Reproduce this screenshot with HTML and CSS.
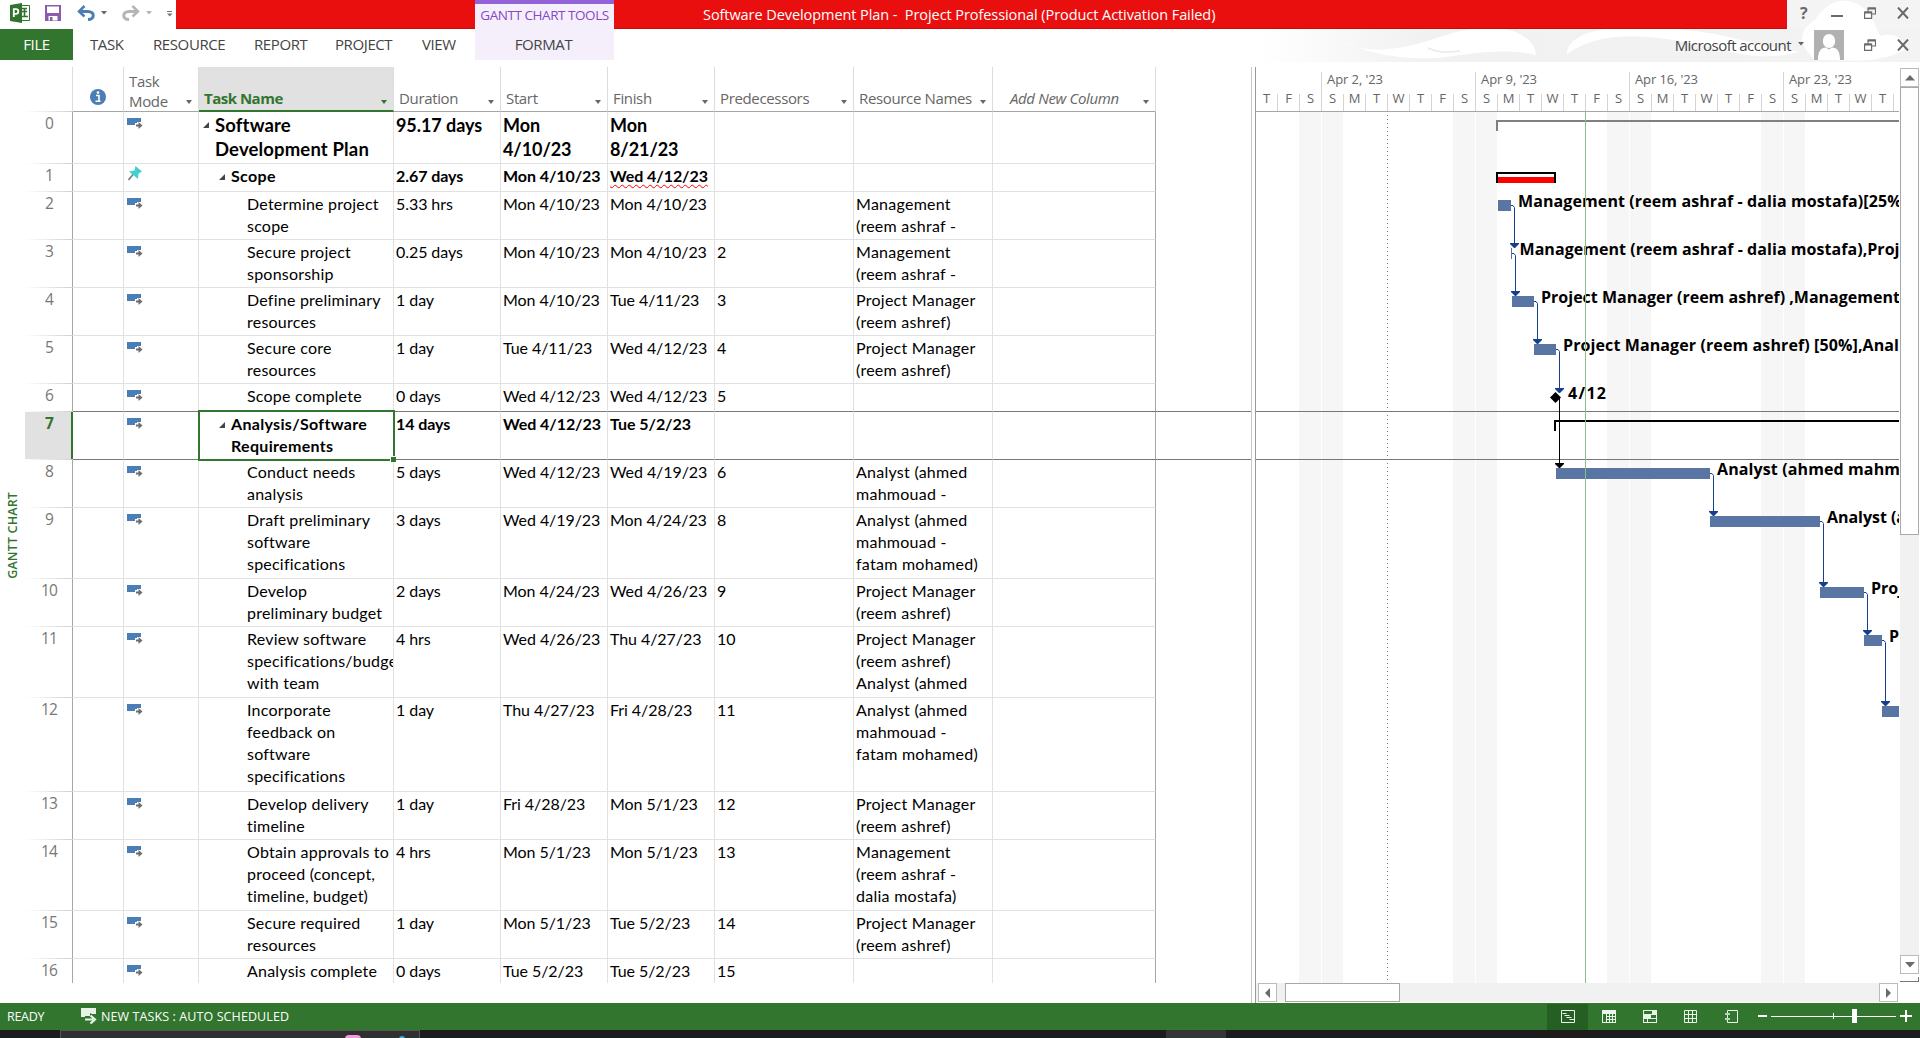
FILE: index.html
```html
<!DOCTYPE html>
<html lang="en">
<head>
<meta charset="utf-8">
<title>Software Development Plan - Project Professional</title>
<link rel="stylesheet" href="styles.css">
</head>
<body>
<svg class="defs" width="0" height="0">
  <symbol id="auto" viewBox="0 0 16 11"><path fill="#4a7eb5" d="M0 0h14v4h-4v1H8v2H0z"/><path d="M9 7.5h4" stroke="#6d6d6d" stroke-width="2"/><path d="M11.5 4l4 3.500-4 3.500" fill="#6d6d6d"/></symbol>
  <symbol id="pin" viewBox="0 0 14 15"><path d="M.5 14L5 8.500" stroke="#7a7a7a" stroke-width="1.600"/><path fill="#41d0cf" d="M7.500 0L14 5.500 10.500 7.500 10 13 1 5.500 6.500 4.500z"/></symbol>
  <symbol id="restore" viewBox="0 0 12 12"><path d="M4 4.500V1h7.500v6H8" fill="none" stroke="#6a6a6a" stroke-width="1.200"/><path d="M4 1.500h7.500M.5 5.500h7" stroke="#6a6a6a" stroke-width="2"/><path d="M.6 5h7v6.400h-7z" fill="none" stroke="#6a6a6a" stroke-width="1.200"/></symbol>
  <symbol id="close" viewBox="0 0 12 12"><path d="M1 .5l10 11M11 .5L1 11.500" stroke="#6a6a6a" stroke-width="2"/></symbol>
</svg>

<header class="top">
  <svg class="art" width="660" height="62" viewBox="1260 0 660 62">
    <defs><linearGradient id="fade"><stop offset="0" stop-color="#f1f1f1" stop-opacity="0"/><stop offset=".25" stop-color="#f1f1f1"/><stop offset="1" stop-color="#f3f3f3"/></linearGradient></defs>
    <path fill="url(#fade)" d="M1260 29h660v33h-660z"/><path fill="#f4f4f4" d="M1786 0h134v29h-134z"/>
    <path fill="#fff" d="M1325 31c25 18 40 21 72 17 40-5 65-26 109-19 20 5 29 15 30 26-30-7-62-2-90 2-35 5-90-3-121-26z"/>
    <path fill="#fff" d="M1567 54c0-24 52-33 120-24 50 6 60 14 113 22-35 8-55 4-95-6-65-14-106-14-138 8z"/>
    <path fill="#fff" d="M1815 20c15-24 38-25 55-6l10 22c15-4 25 2 24 14-20 12-50 12-90 9-15-14-17-28 1-39z"/>
    <path d="M1428 48c8 4 15 5 32 3" fill="none" stroke="#e9e9e9" stroke-width="1.500"/>
  </svg>
  <div class="titlebar">
    <svg class="qat" width="176" height="29" viewBox="0 0 176 29">
      <path d="M20 5.500h9.500v15H20z" fill="#fff" stroke="#2f732e"/><path d="M22 8.500h5M21 11.500h6M22 16.500h6M24.500 9v8" stroke="#2f732e" stroke-width="1.600"/>
      <path fill="#2f732e" d="M10 5l12-2v20l-12-2z"/><path d="M13.800 17V9.200h2.200a2 2 0 0 1 0 4.600h-2" fill="none" stroke="#fff" stroke-width="1.800"/>
      <path fill="#8c5aae" d="M45 5h16v16H45z"/><path fill="#fff" d="M47 6.500h12v6.500H47zM48.500 16h9v4.500h-9z"/><path fill="#8c5aae" d="M50 17h2.500v4H50z"/>
      <path d="M79 11.500h9c7 0 7 8 0 8" fill="none" stroke="#4a7eb5" stroke-width="3"/><path d="M84.500 6L79 11.500l5.500 5" fill="none" stroke="#4a7eb5" stroke-width="2.500"/>
      <path fill="#666" d="M101 11h6l-3 3.500z"/>
      <path d="M138 11.500h-9c-7 0-7 8 0 8" fill="none" stroke="#b5b5b5" stroke-width="3"/><path d="M132.500 6l5.500 5.500-5.500 5" fill="none" stroke="#b5b5b5" stroke-width="2.500"/>
      <path fill="#b5b5b5" d="M146 11h6l-3 3.500z"/><path fill="#777" d="M167 11h5v1h-5zM167 13.500h5.500l-2.750 3z"/>
    </svg>
    <div class="red red-left"></div>
    <div class="tooltab"><span class="t-tools">GANTT CHART TOOLS</span></div>
    <div class="red red-right"><span class="t-title">Software Development Plan -&nbsp; Project Professional (Product Activation Failed)</span></div>
    <div class="winbtns">
      <span class="help">?</span>
      <svg width="12" height="12" viewBox="0 0 12 12"><path d="M0 9h12" stroke="#6a6a6a" stroke-width="2"/></svg>
      <svg width="12" height="12"><use href="#restore"/></svg>
      <svg width="12" height="12"><use href="#close"/></svg>
    </div>
  </div>
  <nav class="tabs">
    <span class="file">FILE</span><span class="tab task">TASK</span><span class="tab resource">RESOURCE</span><span class="tab report">REPORT</span><span class="tab project">PROJECT</span><span class="tab view">VIEW</span><span class="format">FORMAT</span>
    <div class="account">
      <span class="acct-name">Microsoft account</span>
      <svg class="acct-caret" width="6" height="4" viewBox="0 0 6 4"><path fill="#666" d="M0 0h6l-3 3.500z"/></svg>
      <svg class="avatar" width="30" height="30" viewBox="0 0 30 30"><path fill="#b1b1b1" d="M0 0h30v30H0z"/><ellipse cx="15" cy="11" rx="6.200" ry="7" fill="#fff"/><path fill="#fff" d="M4 30c0-9 3-12.500 8-12.500l3 2 3-2c5 0 8 3.500 8 12.500z"/></svg>
      <svg class="r2" width="12" height="12"><use href="#restore"/></svg>
      <svg width="12" height="12"><use href="#close"/></svg>
    </div>
  </nav>
</header>

<main class="work">
  <aside class="strip"><span>GANTT CHART</span></aside>
  <section class="sheet">
    <div class="row head">
      <div class="num"></div>
      <div class="c"><svg class="info" width="16" height="16" viewBox="0 0 16 16"><circle cx="8" cy="8" r="8" fill="#4a7eb5"/><path d="M6 6.500h3V12M5.500 12.300h5" fill="none" stroke="#fff" stroke-width="1.600"/><circle cx="8" cy="3.600" r="1.300" fill="#fff"/></svg></div>
      <div class="c two"><span>Task
Mode</span><i></i></div>
      <div class="c sel"><span class="h-name">Task Name</span><i></i></div>
      <div class="c"><span>Duration</span><i></i></div>
      <div class="c"><span>Start</span><i></i></div>
      <div class="c"><span>Finish</span><i></i></div>
      <div class="c"><span>Predecessors</span><i></i></div>
      <div class="c"><span>Resource Names</span><i></i></div>
      <div class="c add"><span>Add New Column</span><i></i></div>
    </div>
    <div class="row r0"><div class="num">0</div><div class="c"></div><div class="c m"><svg><use href="#auto"/></svg></div><div class="c n l0"><b></b>Software
Development Plan</div><div class="c">95.17 days</div><div class="c">Mon
4/10/23</div><div class="c">Mon
8/21/23</div><div class="c"></div><div class="c"></div><div class="c"></div></div>
    <div class="row h1 bold"><div class="num">1</div><div class="c"></div><div class="c m"><svg class="pin"><use href="#pin"/></svg></div><div class="c n l1"><b></b>Scope</div><div class="c">2.67 days</div><div class="c">Mon 4/10/23</div><div class="c"><u>Wed 4/12/23</u></div><div class="c"></div><div class="c"></div><div class="c"></div></div>
    <div class="row h2"><div class="num">2</div><div class="c"></div><div class="c m"><svg><use href="#auto"/></svg></div><div class="c n">Determine project
scope</div><div class="c">5.33 hrs</div><div class="c">Mon 4/10/23</div><div class="c">Mon 4/10/23</div><div class="c"></div><div class="c res">Management
(reem ashraf -</div><div class="c"></div></div>
    <div class="row h2"><div class="num">3</div><div class="c"></div><div class="c m"><svg><use href="#auto"/></svg></div><div class="c n">Secure project
sponsorship</div><div class="c">0.25 days</div><div class="c">Mon 4/10/23</div><div class="c">Mon 4/10/23</div><div class="c">2</div><div class="c res">Management
(reem ashraf -</div><div class="c"></div></div>
    <div class="row h2"><div class="num">4</div><div class="c"></div><div class="c m"><svg><use href="#auto"/></svg></div><div class="c n">Define preliminary
resources</div><div class="c">1 day</div><div class="c">Mon 4/10/23</div><div class="c">Tue 4/11/23</div><div class="c">3</div><div class="c res">Project Manager
(reem ashref)</div><div class="c"></div></div>
    <div class="row h2"><div class="num">5</div><div class="c"></div><div class="c m"><svg><use href="#auto"/></svg></div><div class="c n">Secure core
resources</div><div class="c">1 day</div><div class="c">Tue 4/11/23</div><div class="c">Wed 4/12/23</div><div class="c">4</div><div class="c res">Project Manager
(reem ashref)</div><div class="c"></div></div>
    <div class="row h1 edge"><div class="num">6</div><div class="c"></div><div class="c m"><svg><use href="#auto"/></svg></div><div class="c n">Scope complete</div><div class="c">0 days</div><div class="c">Wed 4/12/23</div><div class="c">Wed 4/12/23</div><div class="c">5</div><div class="c"></div><div class="c"></div><div class="fill"></div></div>
    <div class="row h2 edge bold current"><div class="num">7</div><div class="c"></div><div class="c m"><svg><use href="#auto"/></svg></div><div class="c n l1 picked"><b></b>Analysis/Software
Requirements</div><div class="c">14 days</div><div class="c">Wed 4/12/23</div><div class="c">Tue 5/2/23</div><div class="c"></div><div class="c"></div><div class="c"></div><div class="fill"></div></div>
    <div class="row h2"><div class="num">8</div><div class="c"></div><div class="c m"><svg><use href="#auto"/></svg></div><div class="c n">Conduct needs
analysis</div><div class="c">5 days</div><div class="c">Wed 4/12/23</div><div class="c">Wed 4/19/23</div><div class="c">6</div><div class="c res">Analyst (ahmed
mahmouad -</div><div class="c"></div></div>
    <div class="row h3"><div class="num">9</div><div class="c"></div><div class="c m"><svg><use href="#auto"/></svg></div><div class="c n">Draft preliminary
software
specifications</div><div class="c">3 days</div><div class="c">Wed 4/19/23</div><div class="c">Mon 4/24/23</div><div class="c">8</div><div class="c res">Analyst (ahmed
mahmouad -
fatam mohamed)</div><div class="c"></div></div>
    <div class="row h2"><div class="num">10</div><div class="c"></div><div class="c m"><svg><use href="#auto"/></svg></div><div class="c n">Develop
preliminary budget</div><div class="c">2 days</div><div class="c">Mon 4/24/23</div><div class="c">Wed 4/26/23</div><div class="c">9</div><div class="c res">Project Manager
(reem ashref)</div><div class="c"></div></div>
    <div class="row h3"><div class="num">11</div><div class="c"></div><div class="c m"><svg><use href="#auto"/></svg></div><div class="c n">Review software
specifications/budget
with team</div><div class="c">4 hrs</div><div class="c">Wed 4/26/23</div><div class="c">Thu 4/27/23</div><div class="c">10</div><div class="c res">Project Manager
(reem ashref)
Analyst (ahmed</div><div class="c"></div></div>
    <div class="row h4"><div class="num">12</div><div class="c"></div><div class="c m"><svg><use href="#auto"/></svg></div><div class="c n">Incorporate
feedback on
software
specifications</div><div class="c">1 day</div><div class="c">Thu 4/27/23</div><div class="c">Fri 4/28/23</div><div class="c">11</div><div class="c res">Analyst (ahmed
mahmouad -
fatam mohamed)</div><div class="c"></div></div>
    <div class="row h2"><div class="num">13</div><div class="c"></div><div class="c m"><svg><use href="#auto"/></svg></div><div class="c n">Develop delivery
timeline</div><div class="c">1 day</div><div class="c">Fri 4/28/23</div><div class="c">Mon 5/1/23</div><div class="c">12</div><div class="c res">Project Manager
(reem ashref)</div><div class="c"></div></div>
    <div class="row h3"><div class="num">14</div><div class="c"></div><div class="c m"><svg><use href="#auto"/></svg></div><div class="c n">Obtain approvals to
proceed (concept,
timeline, budget)</div><div class="c">4 hrs</div><div class="c">Mon 5/1/23</div><div class="c">Mon 5/1/23</div><div class="c">13</div><div class="c res">Management
(reem ashraf -
dalia mostafa)</div><div class="c"></div></div>
    <div class="row h2"><div class="num">15</div><div class="c"></div><div class="c m"><svg><use href="#auto"/></svg></div><div class="c n">Secure required
resources</div><div class="c">1 day</div><div class="c">Mon 5/1/23</div><div class="c">Tue 5/2/23</div><div class="c">14</div><div class="c res">Project Manager
(reem ashref)</div><div class="c"></div></div>
    <div class="row last"><div class="num">16</div><div class="c"></div><div class="c m"><svg><use href="#auto"/></svg></div><div class="c n">Analysis complete</div><div class="c">0 days</div><div class="c">Tue 5/2/23</div><div class="c">Tue 5/2/23</div><div class="c">15</div><div class="c"></div><div class="c"></div></div>
  </section>
  <div class="split"></div>
  <section class="chartpane">
    <svg class="chart" width="643" height="916" viewBox="1256 67 643 916">
      <defs>
        <pattern id="week" x="1299" y="112" width="154" height="900" patternUnits="userSpaceOnUse"><path fill="#f6f6f6" d="M0 0h22v900H0zM23 0h21v900H23z"/></pattern>
        <pattern id="day" x="1255" y="94" width="22" height="18" patternUnits="userSpaceOnUse"><path fill="#d4d4d4" d="M0 0h1v18H0z"/></pattern>
        <path id="tip" d="M-4.500-5h9v1L.5 0h-1l-4-4z"/>
      </defs>
      <path fill="url(#week)" d="M1256 112h643v871h-643z"/>
      <path fill="url(#day)" d="M1257 94h642v17h-642z"/>
      <path d="M1321.500 72v39M1475.500 72v39M1629.500 72v39M1783.500 72v39" stroke="#d4d4d4"/>
      <path d="M1256 111.500h643" stroke="#a6a6a6"/>
      <g class="scale">
        <text x="1327" y="84" textLength="56">Apr 2, '23</text><text x="1481" y="84" textLength="56">Apr 9, '23</text><text x="1635" y="84" textLength="63">Apr 16, '23</text><text x="1789" y="84" textLength="63">Apr 23, '23</text>
      </g>
      <g class="days">
        <text x="1266.500" y="103">T</text><text x="1288.500" y="103">F</text><text x="1310.500" y="103">S</text><text x="1332.500" y="103">S</text><text x="1354.500" y="103">M</text><text x="1376.500" y="103">T</text><text x="1398.500" y="103">W</text><text x="1420.500" y="103">T</text><text x="1442.500" y="103">F</text><text x="1464.500" y="103">S</text><text x="1486.500" y="103">S</text><text x="1508.500" y="103">M</text><text x="1530.500" y="103">T</text><text x="1552.500" y="103">W</text><text x="1574.500" y="103">T</text><text x="1596.500" y="103">F</text><text x="1618.500" y="103">S</text><text x="1640.500" y="103">S</text><text x="1662.500" y="103">M</text><text x="1684.500" y="103">T</text><text x="1706.500" y="103">W</text><text x="1728.500" y="103">T</text><text x="1750.500" y="103">F</text><text x="1772.500" y="103">S</text><text x="1794.500" y="103">S</text><text x="1816.500" y="103">M</text><text x="1838.500" y="103">T</text><text x="1860.500" y="103">W</text><text x="1882.500" y="103">T</text>
      </g>
      <path d="M1387.500 115v868" stroke="#777" stroke-dasharray="1 3"/>
      <path fill="#808080" d="M1496 120h403v2h-401v9h-2z"/>
      <path fill="#000" d="M1496 172h60v11h-2v-9h-56v9h-2z"/><path fill="#f00" d="M1498 177h56v6h-56z"/>
      <path d="M1256 411.500h643M1256 459.500h643" stroke="#777"/>
      <path fill="#000" d="M1554 420h345v2h-343v9h-2z"/>
      <path fill="#5975a4" d="M1498 200h13v11h-13zM1512 296h22v11h-22zM1534 344h22v11h-22zM1556 468h154v11h-154zM1710 516h110v11h-110zM1820 587h44v11h-44zM1864 635h18v11h-18zM1882 706h17v11h-17zM1511 248h1v11h-1z"/>
      <g fill="none" stroke="#16408c">
        <path d="M1511 205.500h2l1.500 2V245M1512 253.500h2l1.500 2V293M1534 301.500h2l1.500 2V341M1556 349.500h2l1.500 2V390M1710 473.500h2l1.500 2V513M1820 521.500h2l1.500 2V584M1864 592.500h2l1.500 2V632M1882 640.500h2l1.500 2V703"/>
      </g>
      <g fill="#16408c"><use href="#tip" x="1514.500" y="248"/><use href="#tip" x="1515.500" y="296"/><use href="#tip" x="1537.500" y="344"/><use href="#tip" x="1559.500" y="393"/><use href="#tip" x="1713.500" y="516"/><use href="#tip" x="1823.500" y="587"/><use href="#tip" x="1867.500" y="635"/><use href="#tip" x="1885.500" y="706"/></g>
      <path d="M1559.500 397V465" stroke="#000"/><use href="#tip" x="1559.500" y="468"/><path d="M1555.500 392l5.500 5.500-5.500 5.500-5.500-5.500z"/>
      <g class="labels">
        <text x="1518" y="207" textLength="389">Management (reem ashraf - dalia mostafa)[25%]</text>
        <text x="1519.500" y="255" textLength="380">Management (reem ashraf - dalia mostafa),Proj</text>
        <text x="1541" y="303" textLength="359">Project Manager (reem ashref) ,Management</text>
        <text x="1563" y="351" textLength="336">Project Manager (reem ashref) [50%],Anal</text>
        <text x="1568" y="399" textLength="38">4/12</text>
        <text x="1717" y="475" textLength="193">Analyst (ahmed mahmo</text>
        <text x="1827" y="523" textLength="79">Analyst (a</text>
        <text x="1871" y="594">Project</text>
        <text x="1889" y="642">Project</text>
      </g>
      <path d="M1585.500 112v871" stroke="#8dbd8b"/>
    </svg>
    <div class="hscroll"><span class="btn"><svg width="6" height="10" viewBox="0 0 6 10"><path fill="#6a6a6a" d="M5 0v10L0 5z"/></svg></span><span class="hthumb"></span><span class="btn end"><svg width="6" height="10" viewBox="0 0 6 10"><path fill="#6a6a6a" d="M0 0v10l5-5z"/></svg></span></div>
  </section>
  <div class="vscroll"><span class="btn"><svg width="10" height="6" viewBox="0 0 10 6"><path fill="#6a6a6a" d="M0 5.500h10L5 0z"/></svg></span><span class="vthumb"></span><span class="vtrack"></span><span class="btn"><svg width="10" height="6" viewBox="0 0 10 6"><path fill="#6a6a6a" d="M0 0h10L5 5.500z"/></svg></span><span class="grip"></span></div>
</main>

<footer class="status">
  <span class="t-ready">READY</span>
  <svg class="newicon" width="16" height="16" viewBox="0 0 16 16"><path fill="#e8f1e8" d="M0 0h15v6h-4l-2-1v3H4v1H0z"/><path d="M4 11.500h8M9.500 7.500l4.500 4-4.500 4" fill="none" stroke="#e8f1e8" stroke-width="2.200"/></svg>
  <span class="t-new">NEW TASKS : AUTO SCHEDULED</span>
  <div class="views">
    <span class="v on"><svg width="14" height="13" viewBox="0 0 14 13"><path d="M.5.500h13v12H.5zM1.500 3.500h4M3.500 5.500h5M5.500 7.500h5M8.500 9.500h5" fill="none" stroke="#e8f5e8"/></svg></span>
    <span class="v"><svg width="14" height="13" viewBox="0 0 14 13"><path fill="#e8f5e8" d="M0 0h14v13H0z"/><path fill="#31752f" d="M1 4h3v8H1zM5 4h2v2H5zM8 4h2v2H8zM11 4h2v2h-2zM5 7h2v2H5zM8 7h2v2H8zM11 7h2v2h-2zM5 10h2v2H5zM8 10h2v2H8zM11 10h2v2h-2z"/></svg></span>
    <span class="v"><svg width="14" height="13" viewBox="0 0 14 13"><path fill="#e8f5e8" d="M0 0h14v13H0z"/><path fill="#31752f" d="M1 1h8v3H1zM8 5h5v3H8zM1 9h3v3H1zM5 9h8v3H5z"/></svg></span>
    <span class="v"><svg width="13" height="13" viewBox="0 0 13 13"><path d="M.5.500h12v12H.5zM4.500 0v13M8.500 0v13M0 4.500h13M0 8.500h13" fill="none" stroke="#e8f5e8"/></svg></span>
    <span class="v"><svg width="13" height="13" viewBox="0 0 13 13"><path d="M2.500.500h10v12h-10z" fill="none" stroke="#e8f5e8"/><path fill="#b9d4b9" d="M0 3h5v2H0zM0 8h5v2H0z"/></svg></span>
  </div>
  <svg class="zoom" width="160" height="27" viewBox="1755 1003 160 27"><path fill="#fff" d="M1758 1015h9v2h-9zM1771 1016h125v1h-125zM1833 1013h1v6h-1zM1852 1009h5v14h-5zM1900 1015h12v2h-12zM1905 1010h2v12h-2z"/></svg>
</footer>
<div class="taskbar"><div class="search"><i class="pink"></i><i class="blue"></i></div><div class="app"></div></div>
</body>
</html>
```
FILE: styles.css
```css
*, *::before, *::after { box-sizing: border-box; }
body { margin: 0; width: 1920px; height: 1038px; overflow: hidden; background: #fff; font-family: "Open Sans", "Noto Sans", sans-serif; }
svg { display: block; }
.defs { position: absolute; }
.top { position: relative; height: 67px; }
.art { position: absolute; right: 0; top: 0; }
.titlebar { position: relative; display: flex; height: 29px; }
.red { background: #e90f0f; border-bottom: 1px solid #c80a0a; }
.red-left { width: 299px; }
.red-right { width: 1173px; padding-left: 89px; color: #fff; font-size: 14.5px; line-height: 29px; white-space: nowrap; }
.tooltab { width: 139px; border-top: 4px solid #9362d6; background: #f5effb; color: #8648c9; font-size: 13.5px; line-height: 23px; text-align: center; white-space: nowrap; }
.t-tools { letter-spacing: -.45px; }
.t-title { letter-spacing: -.07px; }
.winbtns { display: flex; align-items: center; padding: 0 0 3px 13px; gap: 21px; }
.help { width: 10px; color: #6a6a6a; font-size: 16px; font-weight: 700; line-height: 20px; }
.tabs { position: relative; display: flex; height: 31px; color: #444; font-size: 15px; line-height: 30px; white-space: nowrap; letter-spacing: -.4px; }
.file { width: 73px; background: #31752f; color: #fff; text-align: center; }
.tab { padding-left: 17px; }
.task { width: 63px; }
.resource { width: 101px; }
.report { width: 81px; }
.project { width: 87px; }
.view { width: 70px; }
.format { width: 139px; background: #f5effb; text-align: center; padding-right: 2px; }
.account { display: flex; align-items: center; margin-left: auto; padding-right: 11px; }
.acct-name { letter-spacing: -.54px; }
.acct-caret { margin: 0 10px 2px 7px; }
.r2 { margin: 0 21px 0 20px; }

.work { display: flex; height: 936px; }
.strip { width: 25px; display: flex; align-items: flex-end; padding: 0 0 424px 4px; }
.strip span { writing-mode: vertical-rl; transform: rotate(180deg); font-size: 12.5px; font-weight: 600; line-height: 17px; color: #31752f; letter-spacing: .15px; }
.sheet { width: 1226px; font: 16px/22px Lato, Carlito, sans-serif; color: #000; }
.row { display: grid; grid-template-columns: 48px 51px 75px 195px 107px 107px 107px 139px 139px 163px 95px; white-space: pre; }
.h1 { height: 28px; }
.h2 { height: 48px; }
.h3 { height: 71px; }
.h4 { height: 94px; }
.last { height: 24px; }
.c { border-right: 1px solid #e1e1e1; border-bottom: 1px solid #e1e1e1; padding: 1px 0 0 2px; overflow: hidden; letter-spacing: -.07px; }
.num { font-family: "Open Sans", sans-serif; font-size: 15.5px; line-height: 22px; color: #777; text-align: center; border-right: 1px solid #a6a6a6; border-bottom: 1px solid; border-image: linear-gradient(90deg, #fff, #d0d0d0) 1; box-shadow: inset -1px 0 #a6a6a6; letter-spacing: -.8px; }
.row .num { border-right: 0; }
.c:nth-child(10) { border-right-color: #a6a6a6; }
.n { padding-left: 48px; letter-spacing: .22px; }
.res { letter-spacing: .26px; }
.m { padding: 6px 0 0 3px; }
.m svg { width: 16px; height: 11px; }
.m .pin { width: 14px; height: 15px; margin: -4px 0 0 1px; }
.bold { font-weight: 700; }
.bold .n { letter-spacing: .32px; }
.l0, .l1 { display: block; position: relative; }
.l1 { padding-left: 32px; }
.l0 { padding-left: 16px; }
.n b { position: absolute; left: 20px; top: 10px; border-left: 6px solid transparent; border-bottom: 6px solid #444; }
.n.l0 b { left: 4px; }
.r0 { height: 52px; font-size: 18px; font-weight: 700; line-height: 24px; }
.r0 .n { font-size: 18.5px; letter-spacing: .15px; }
.r0 .num, .bold .num { font-weight: 400; }
.last > * { border-bottom: 0; }
.row u { text-decoration: underline wavy #f00 1px; text-underline-offset: 2px; }
.edge > .c, .fill { border-bottom: 1px solid #777; }
.row.current > .num { background: #e1e1e1; color: #31752f; font-weight: 700; box-shadow: inset -2px 0 #31752f; }
.picked { overflow: visible; z-index: 1; }
.picked::before { content: ""; position: absolute; left: -1px; top: -2px; width: 197px; height: 51px; border: 2px solid #31752f; }
.picked::after { content: ""; position: absolute; right: -3px; bottom: -3px; width: 6px; height: 6px; background: #31752f; border: 1px solid #fff; border-width: 1px 0 0 1px; }
.head { height: 45px; font: 15px/20px "Open Sans", sans-serif; color: #666; }
.head .c { display: flex; align-items: flex-end; padding: 0 6px 1px 5px; letter-spacing: -.35px; border-bottom-color: #a6a6a6; border-right: 1px solid #dcdcdc; }
.head i { width: 0; margin: 0 0 6px auto; border: 3.5px solid transparent; border-top: 4px solid #666; border-bottom: 0; }
.head .num { box-shadow: inset -1px 0 #ddd; }
.head span { margin-bottom: 2px; }
.head .two span { margin-bottom: -1px; }
.head .info { margin: 0 0 5px 12px; }
.head .sel { background: #e1e1e1; color: #31752f; font-weight: 700; border-bottom: 2px solid #31752f; padding: 0 6px 0 5px; }
.head .sel span { letter-spacing: -.5px; }
.head .sel i { border-top-color: #31752f; }
.head .add { font-style: italic; padding-left: 17px; }
.split { width: 5px; border: 1px solid #c8c8c8; border-width: 0 1px; border-right-color: #999; }
.chartpane { width: 643px; }
.scale, .days { font-size: 13px; fill: #666; }
.days { text-anchor: middle; }
.labels { font-size: 16px; font-weight: 700; fill: #000; }
.btn { width: 19px; height: 19px; display: flex; align-items: center; justify-content: center; border: 1px solid #bbb; background: #fff; }
.hscroll { display: flex; height: 19px; background: #f1f1f1; padding-left: 2px; border-right: 1px solid #fff; }
.hthumb { width: 115px; margin-left: 8px; background: #fff; border: 1px solid #a8a8a8; }
.end { margin-left: auto; }
.vscroll { width: 19px; margin: 1px 0 0 1px; display: flex; flex-direction: column; }
.vthumb { height: 448px; background: #fff; border: 1px solid #a8a8a8; }
.vtrack { height: 420px; background: #f1f1f1; }
.grip { height: 5px; margin-top: 3px; border-right: 1px solid #777; border-bottom: 1px solid #777; }
.status { display: flex; height: 27px; background: #31752f; color: #fff; font-size: 12.5px; line-height: 27px; padding-left: 7px; white-space: nowrap; }
.t-ready { width: 74px; letter-spacing: -.3px; }
.newicon { margin: 5px 4px 0 0; }
.t-new { letter-spacing: .1px; }
.views { display: flex; margin-left: auto; }
.v { width: 41px; display: flex; align-items: center; justify-content: center; padding-bottom: 1px; }
.on { background: #255f23; margin-top: 1px; }
.zoom { margin: 0 5px 0 3px; }
.taskbar { display: flex; height: 8px; background: #1c1c1c; padding-left: 60px; }
.search { display: flex; width: 360px; border: 1px solid #555; border-bottom: 0; background: #303030; padding: 4px 0 0 284px; gap: 38px; }
.pink { width: 16px; height: 4px; border-radius: 8px 8px 0 0; background: #f29be0; }
.blue { width: 6px; height: 4px; margin-top: 1px; border-radius: 3px 3px 0 0; background: #4ca8e0; }
.app { width: 60px; margin-left: 746px; background: #353535; }
```
